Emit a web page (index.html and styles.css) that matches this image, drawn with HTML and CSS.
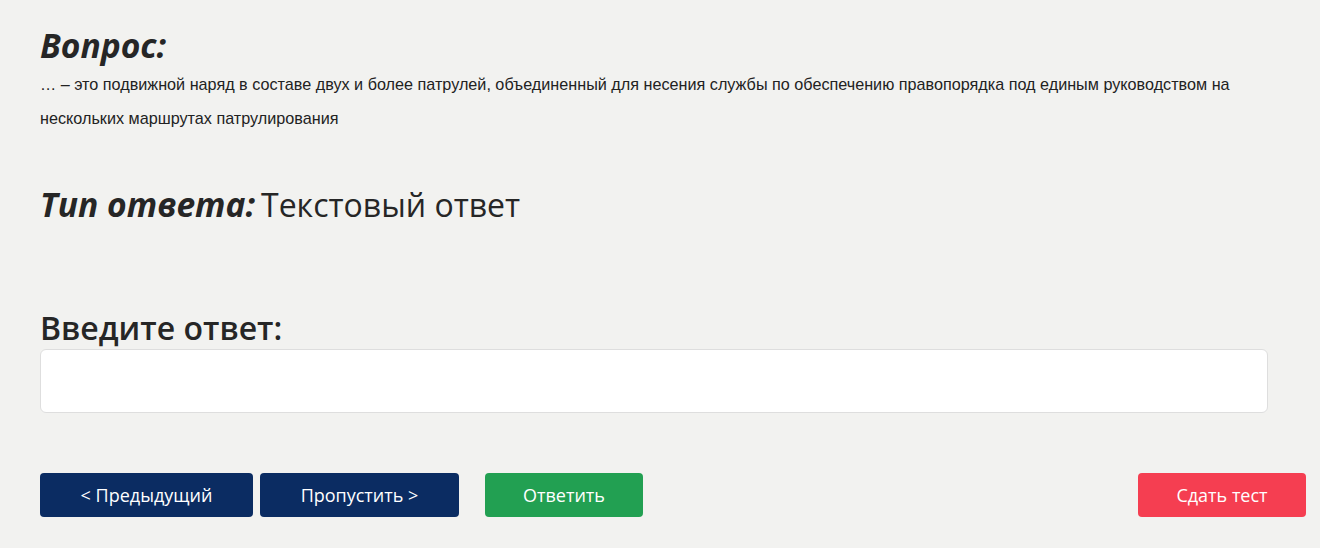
FILE: index.html
```html
<!DOCTYPE html>
<html lang="ru">
  <head>
    <meta charset="utf-8">
    <title>Тест</title>
    <link rel="stylesheet" href="styles.css">
  </head>
  <body>
    <div class="page">
      <div class="block question">
        <h2 class="label">Вопрос:</h2>
        <p class="qtext">… – это подвижной наряд в составе двух и более патрулей, объединенный для несения службы по обеспечению правопорядка под единым руководством на нескольких маршрутах патрулирования</p>
      </div>
      <div class="block type">
        <h2 class="label">Тип ответа:</h2><span class="typevalue">Текстовый ответ</span>
      </div>
      <div class="block answer">
        <h3 class="answerlabel">Введите ответ:</h3>
        <input class="answerinput" type="text">
      </div>
      <div class="buttons">
        <button class="btn navy prevbtn">&lt; Предыдущий</button>
        <button class="btn navy skipbtn">Пропустить &gt;</button>
        <button class="btn green answerbtn">Ответить</button>
        <button class="btn red finishbtn">Сдать тест</button>
      </div>
    </div>
  </body>
</html>
```
FILE: styles.css
```css
html, body {
  margin: 0;
  height: 100%;
  background: #f2f2f0;
}
.page {
  padding: 23px 14px 0 40px;
  font-family: 'Open Sans', 'Noto Sans', sans-serif;
  color: #262626;
}
.label {
  display: inline;
  margin: 0;
  font-size: 33.6px;
  font-weight: 700;
  font-style: italic;
  line-height: 44px;
}
.question .label {
  display: block;
}
.qtext {
  margin: 0;
  font-family: 'Liberation Sans', Arial, sans-serif;
  font-size: 16.2px;
  line-height: 34px;
  color: #222;
  max-width: 1234px;
}
.type {
  margin-top: 47px;
  line-height: 44px;
}
.typevalue {
  font-size: 32px;
  margin-left: 6px;
}
.answer {
  margin-top: 74px;
}
.answerlabel {
  margin: 0;
  font-size: 32px;
  font-weight: 600;
  line-height: 42px;
}
.answerinput {
  display: block;
  box-sizing: border-box;
  width: 1228px;
  height: 64px;
  margin-top: 0;
  border: 1px solid #dedede;
  border-radius: 6px;
  background: #fff;
  font-size: 18px;
  padding: 0 12px;
  outline: none;
}
.buttons {
  display: flex;
  margin-top: 60px;
}
.btn {
  height: 44px;
  border: 0;
  border-radius: 4px;
  color: #fff;
  font-family: 'Open Sans', 'Noto Sans', sans-serif;
  font-size: 18px;
  cursor: pointer;
}
.navy {
  background: #0b2c62;
}
.green {
  background: #22a052;
}
.red {
  background: #f53e51;
}
.prevbtn {
  width: 213px;
}
.skipbtn {
  width: 199px;
  margin-left: 7px;
}
.answerbtn {
  width: 158px;
  margin-left: 26px;
}
.finishbtn {
  width: 168px;
  margin-left: auto;
}
```
